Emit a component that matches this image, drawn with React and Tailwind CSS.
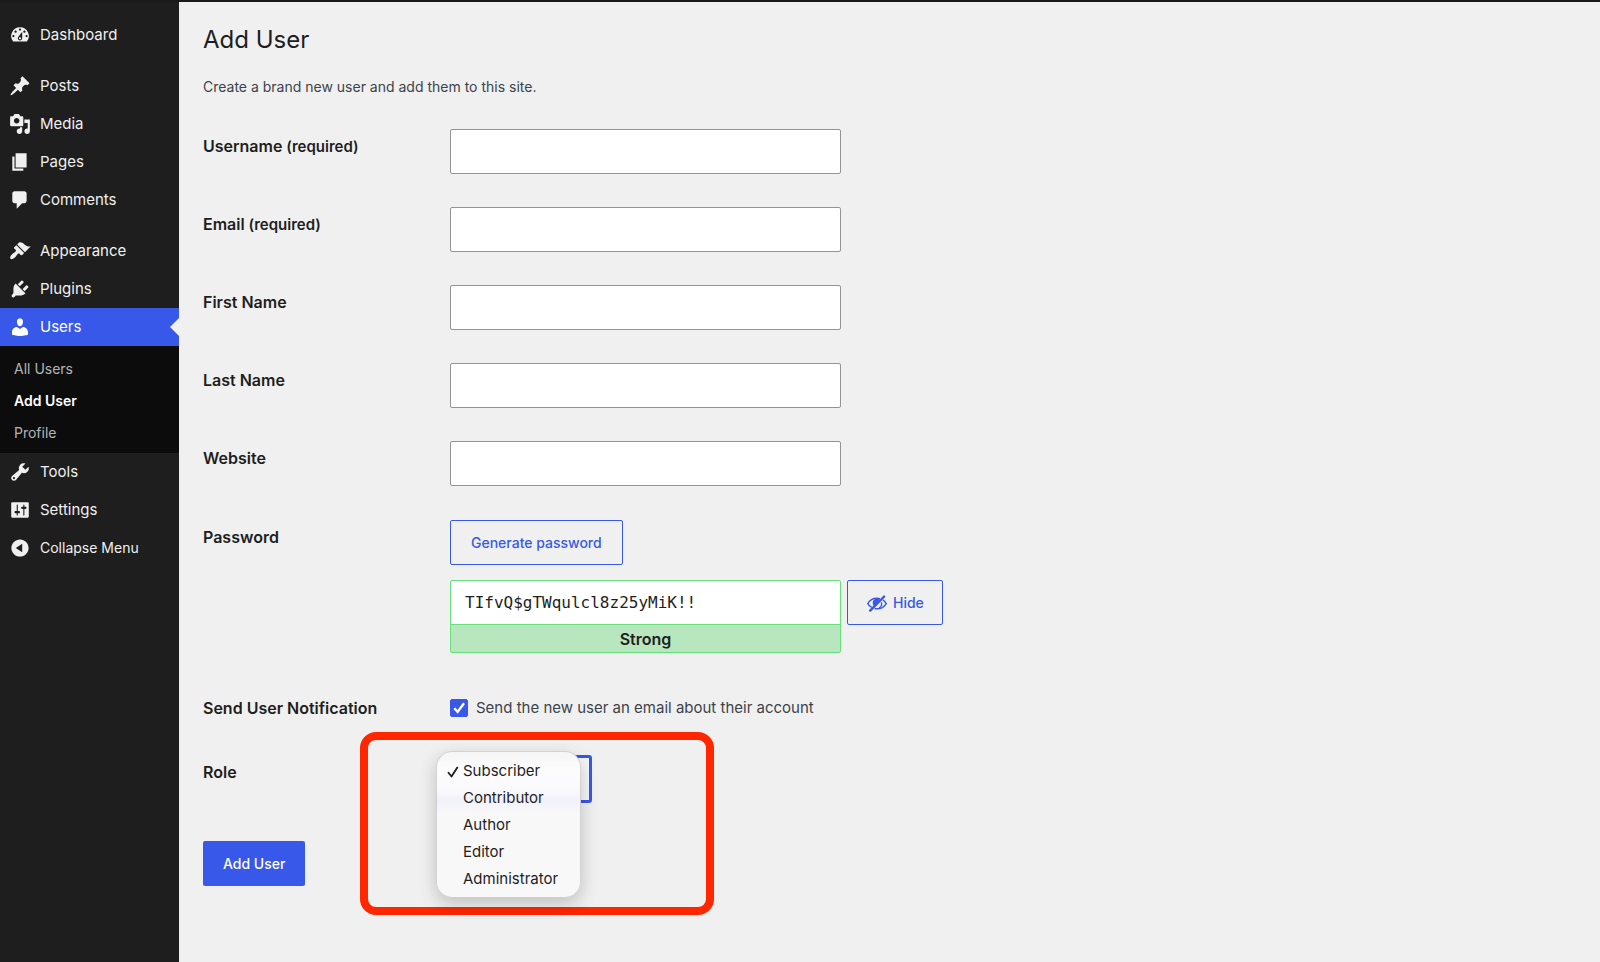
import React, { useState } from "react";
import { clsx } from "clsx";

const ICONS = {
  dashboard:
    "M3.76 16h12.48A7.998 7.998 0 0 0 10 3a7.998 7.998 0 0 0-6.24 13zM10 4c.55 0 1 .45 1 1s-.45 1-1 1s-1-.45-1-1s.45-1 1-1zM6 6c.55 0 1 .45 1 1s-.45 1-1 1s-1-.45-1-1s.45-1 1-1zm8 0c.55 0 1 .45 1 1s-.45 1-1 1s-1-.45-1-1s.45-1 1-1zm-5.37 5.55L12 7v6c0 1.1-.9 2-2 2s-2-.9-2-2c0-.57.24-1.08.63-1.45zM4 10c.55 0 1 .45 1 1s-.45 1-1 1s-1-.45-1-1s.45-1 1-1zm12 0c.55 0 1 .45 1 1s-.45 1-1 1s-1-.45-1-1s.45-1 1-1zm-5 3c0-.55-.45-1-1-1s-1 .45-1 1s.45 1 1 1s1-.45 1-1z",
  posts:
    "M10.44 3.02l1.82-1.82l6.36 6.35l-1.83 1.82c-1.05-.68-2.48-.57-3.41.36l-.75.75c-.92.93-1.04 2.35-.35 3.41l-1.83 1.82l-2.41-2.41l-2.8 2.79c-.42.42-3.38 2.71-3.8 2.29s1.86-3.39 2.28-3.81l2.79-2.79L4.1 9.36l1.83-1.82c1.05.69 2.48.57 3.4-.36l.75-.75c.93-.92 1.05-2.35.36-3.41z",
  media:
    "M13 11V4c0-.55-.45-1-1-1h-1.67L9 1H5L3.67 3H2c-.55 0-1 .45-1 1v7c0 .55.45 1 1 1h10c.55 0 1-.45 1-1zM7 4.5c1.38 0 2.5 1.12 2.5 2.5S8.38 9.5 7 9.5S4.5 8.38 4.5 7S5.62 4.5 7 4.5zM14 6h5v10.5c0 1.38-1.12 2.5-2.5 2.5S14 17.88 14 16.5s1.12-2.5 2.5-2.5c.17 0 .34.02.5.05V9h-3V6zm-4 8.05V13h2v3.5c0 1.38-1.12 2.5-2.5 2.5S7 17.88 7 16.5S8.12 14 9.5 14c.17 0 .34.02.5.05z",
  pages: "M6 15V2h10v13H6zm-1 1h8v2H3V5h2v11z",
  comments:
    "M5 2h9c1.1 0 2 .9 2 2v7c0 1.1-.9 2-2 2h-2l-5 5v-5H5c-1.1 0-2-.9-2-2V4c0-1.1.9-2 2-2z",
  appearance:
    "M14.48 11.06L7.41 3.99l1.5-1.5c.5-.56 2.3-.47 3.51.32c1.21.8 1.43 1.28 2.91 2.1c1.18.64 2.45 1.26 4.45.85zm-.71.71L6.7 4.7L4.93 6.47c-.39.39-.39 1.02 0 1.41l1.06 1.06c.39.39.39 1.03 0 1.42c-.6.6-1.43 1.11-2.21 1.69c-.35.26-.7.53-1.01.84C1.43 14.23.4 16.08 1.4 17.07c.99 1 2.84-.03 4.18-1.36c.31-.31.58-.66.85-1.02c.57-.78 1.08-1.61 1.69-2.21c.39-.39 1.02-.39 1.41 0l1.06 1.06c.39.39 1.02.39 1.41 0z",
  plugins:
    "M13.11 4.36L9.87 7.6L8 5.73l3.24-3.24c.35-.34 1.05-.2 1.56.32c.52.51.66 1.21.31 1.55zm-8 1.77l.91-1.12l9.01 9.01l-1.19.84c-.71.71-2.63 1.16-3.82 1.16H6.14L4.9 17.26c-.59.59-1.54.59-2.12 0a1.49 1.49 0 0 1 0-2.12l1.24-1.24v-3.88c0-1.13.4-3.19 1.09-3.89zm7.26 3.97l3.24-3.24c.34-.35 1.04-.21 1.55.31c.52.51.66 1.21.31 1.55l-3.24 3.25z",
  users:
    "M10 9.25c-2.27 0-2.73-3.44-2.73-3.44C7 4.02 7.82 2 9.97 2c2.16 0 2.98 2.02 2.71 3.81c0 0-.41 3.44-2.68 3.44zm0 2.57L12.72 10c2.39 0 4.52 2.33 4.52 4.53v2.49s-3.65 1.13-7.24 1.13c-3.65 0-7.24-1.13-7.24-1.13v-2.49c0-2.25 1.94-4.48 4.47-4.48z",
  tools:
    "M16.68 9.77a4.543 4.543 0 0 1-4.95.99l-5.41 6.52c-.99.99-2.59.99-3.58 0s-.99-2.59 0-3.57l6.52-5.42c-.68-1.65-.35-3.61.99-4.95c1.28-1.28 3.12-1.62 4.72-1.06l-2.89 2.89l2.82 2.82l2.86-2.87c.53 1.58.18 3.39-1.08 4.65zM3.81 16.21c.4.39 1.04.39 1.43 0c.4-.4.4-1.04 0-1.43c-.39-.4-1.03-.4-1.43 0a1.02 1.02 0 0 0 0 1.43z",
  settings:
    "M18 16V4c0-.55-.45-1-1-1H3c-.55 0-1 .45-1 1v12c0 .55.45 1 1 1h14c.55 0 1-.45 1-1zM8 11h1c.55 0 1 .45 1 1s-.45 1-1 1H8v1.5c0 .28-.22.5-.5.5s-.5-.22-.5-.5V13H6c-.55 0-1-.45-1-1s.45-1 1-1h1V5.5c0-.28.22-.5.5-.5s.5.22.5.5V11zm5-2h-1c-.55 0-1-.45-1-1s.45-1 1-1h1V5.5c0-.28.22-.5.5-.5s.5.22.5.5V7h1c.55 0 1 .45 1 1s-.45 1-1 1h-1v5.5c0 .28-.22.5-.5.5s-.5-.22-.5-.5V9z",
  collapse:
    "M10 2.16c4.33 0 7.84 3.51 7.84 7.84s-3.51 7.84-7.84 7.84S2.16 14.33 2.16 10S5.71 2.16 10 2.16zm2 11.72V6.12L6.18 9.97z",
};

const menuGroups = [
  [{ label: "Dashboard", icon: "dashboard" }],
  [
    { label: "Posts", icon: "posts" },
    { label: "Media", icon: "media" },
    { label: "Pages", icon: "pages" },
    { label: "Comments", icon: "comments" },
  ],
  [
    { label: "Appearance", icon: "appearance" },
    { label: "Plugins", icon: "plugins" },
    {
      label: "Users",
      icon: "users",
      current: true,
      children: ["All Users", "Add User", "Profile"],
    },
    { label: "Tools", icon: "tools" },
    { label: "Settings", icon: "settings" },
  ],
];

const textFields = [
  { id: "username", label: "Username", required: true },
  { id: "email", label: "Email", required: true },
  { id: "first-name", label: "First Name" },
  { id: "last-name", label: "Last Name" },
  { id: "website", label: "Website" },
];

const roles = ["Subscriber", "Contributor", "Author", "Editor", "Administrator"];

const Icon = ({ name, className }) => (
  <svg viewBox="0 0 20 20" fill="currentColor" fillRule="evenodd" aria-hidden="true" className={className}>
    <path d={ICONS[name]} />
  </svg>
);

const HiddenIcon = () => (
  <svg viewBox="0 0 20 20" fill="none" stroke="currentColor" aria-hidden="true" className="size-[22px]">
    <path strokeWidth="1.3" d="M12.6 6.1C11.8 5.9 10.9 5.7 10 5.7 6.5 5.7 3.3 7.5 1.6 10.500c.9 1.5 2.1 2.7 3.6 3.5M15.3 7.2c1.2.8 2.3 1.9 3.1 3.3-1.8 3-5 4.8-8.4 4.8-.8 0-1.500-.1-2.2-.3" />
    <path fill="currentColor" stroke="none" d="M7.2 6.8C5.800 8.500 5.700 11 7 12.800L12.900 6.600C11 5.900 8.800 5.900 7.200 6.800z" />
    <path strokeWidth="1.2" d="M14 9.300c.6 2-.3 4.200-2.200 5.300" />
    <path strokeWidth="2.2" strokeLinecap="round" d="M16.5 4.1L3.8 16.9" />
  </svg>
);

const Sidebar = () => (
  <aside className="w-[179px] shrink-0 bg-[#1e1e1e] text-[#f0f0f0]">
    <nav className="flex flex-col gap-[13px] pt-3.5" aria-label="Main menu">
      {menuGroups.map((group) => (
        <ul key={group[0].label}>
          {group.map((item) => (
            <li key={item.label}>
              <a
                href="#"
                className={clsx(
                  "relative flex h-[38px] items-center gap-[9px] pl-[9px] text-[15px]",
                  item.current && "bg-[#3858e9] text-white"
                )}
              >
                <Icon name={item.icon} className="size-[22px]" />
                {item.label}
                {item.current && (
                  <span className="absolute right-0 top-1/2 -translate-y-1/2 border-y-[9px] border-r-[9px] border-y-transparent border-r-[#f0f0f0]" />
                )}
              </a>
              {item.children && (
                <ul className="bg-[#0c0c0c] pb-1 pt-[7px]">
                  {item.children.map((child) => (
                    <li key={child}>
                      <a
                        href="#"
                        className={clsx(
                          "flex h-8 items-center pl-3.5 text-sm",
                          child === "Add User" ? "font-semibold text-white" : "text-[#b4b4b4]"
                        )}
                      >
                        {child}
                      </a>
                    </li>
                  ))}
                </ul>
              )}
            </li>
          ))}
        </ul>
      ))}
    </nav>
    <button type="button" className="flex h-[38px] w-full items-center gap-[9px] pl-[9px] text-sm">
      <Icon name="collapse" className="size-[22px]" />
      Collapse Menu
    </button>
  </aside>
);

const Row = ({ label, htmlFor, required, className, children }) => (
  <div className={clsx("grid grid-cols-[247px_1fr] items-start", className)}>
    <label htmlFor={htmlFor} className="pt-[5px] text-base font-semibold text-[#1e1e1e]">
      {label}
      {required && <span className="text-[15px]"> (required)</span>}
    </label>
    <div>{children}</div>
  </div>
);

const RolePicker = ({ role, onChange }) => (
  <div className="relative w-fit">
    <select
      id="role"
      value={role}
      onChange={(e) => onChange(e.target.value)}
      className="block h-12 w-[142px] appearance-none rounded-[3px] border-[3px] border-[#3858e9] bg-[#f6f6f6] pl-3 text-[15px]"
    >
      {roles.map((r) => (
        <option key={r}>{r}</option>
      ))}
    </select>

    {/* Highlight frame */}
    <div className="pointer-events-none absolute -left-[90px] -top-[23px] h-[183px] w-[354px] rounded-2xl border-8 border-[#ff2600]" />

    {/* Open menu */}
    <ul
      role="listbox"
      aria-label="Role"
      className="absolute -left-3.5 -top-1 w-[145px] rounded-2xl border border-black/15 bg-[linear-gradient(#f5f5f6,#fcfcfd_12%,#fafafd_26%,#f1f1fb_33%,#f8f8f9_42%)] px-2.5 pt-1.5 pb-1 shadow-[0_6px_18px_rgba(0,0,0,0.2)]"
    >
      {roles.map((r) => (
        <li
          key={r}
          role="option"
          aria-selected={r === role}
          onClick={() => onChange(r)}
          className="flex h-[27px] items-center gap-1 text-[15px] text-[#1e1e1e]"
        >
          <svg viewBox="0 0 12 12" className="size-3 shrink-0" fill="none" stroke="currentColor" strokeWidth="1.8" strokeLinecap="round" strokeLinejoin="round">
            {r === role && <path d="M1.5 6.8L4.5 10.5L10.3 1.6" />}
          </svg>
          {r}
        </li>
      ))}
    </ul>
  </div>
);

const App = () => {
  const [password, setPassword] = useState("TIfvQ$gTWqulcl8z25yMiK!!");
  const [notify, setNotify] = useState(true);
  const [role, setRole] = useState("Subscriber");

  return (
    <div className="flex min-h-screen border-t-2 border-[#1a1a1a] bg-[#f0f0f0] font-['Inter',sans-serif] text-[#3c434a]">
      <Sidebar />
      <main className="flex-1 px-6 pt-5">
        <h1 className="text-2xl leading-9 text-[#1e1e1e]">Add User</h1>
        <p className="mt-[18px] text-sm leading-[22px]">Create a brand new user and add them to this site.</p>

        <form className="mt-[31px]" onSubmit={(e) => e.preventDefault()}>
          <div className="space-y-[33px]">
            {textFields.map((field) => (
              <Row key={field.id} label={field.label} htmlFor={field.id} required={field.required}>
                <input
                  id={field.id}
                  type="text"
                  className="block h-[45px] w-[391px] rounded-xs border border-[#949494] bg-white px-3.5 text-base"
                />
              </Row>
            ))}
          </div>

          <Row label="Password" htmlFor="password" className="mt-[34px]">
            <button type="button" className="block h-[45px] rounded-xs border border-[#3858e9] px-5 text-sm font-medium text-[#3858e9]">
              Generate password
            </button>
            <div className="mt-[15px] flex items-start gap-1.5">
              <div className="w-[391px]">
                <input
                  id="password"
                  type="text"
                  value={password}
                  onChange={(e) => setPassword(e.target.value)}
                  className="block h-[45px] w-full rounded-t-xs border border-[#68de7c] bg-white px-3.5 font-['DejaVu_Sans_Mono',monospace] text-base text-[#1e1e1e]"
                />
                <div className="-mt-px h-[29px] rounded-b-xs border border-[#68de7c] bg-[#b8e6bf] text-center text-base leading-7 font-semibold text-[#1e1e1e]">
                  Strong
                </div>
              </div>
              <button type="button" className="flex h-[45px] items-center gap-[5px] rounded-xs border border-[#3858e9] px-[18px] text-sm font-medium text-[#3858e9]">
                <HiddenIcon />
                Hide
              </button>
            </div>
          </Row>

          <Row label="Send User Notification" htmlFor="notify" className="mt-[38px]">
            <label className="flex items-center gap-2 pt-[5px] text-[15px] leading-6">
              <span className="relative size-[18px]">
                <input
                  id="notify"
                  type="checkbox"
                  checked={notify}
                  onChange={(e) => setNotify(e.target.checked)}
                  className="block size-[18px] appearance-none rounded-xs border border-[#949494] bg-white checked:border-[#3858e9] checked:bg-[#3858e9]"
                />
                {notify && (
                  <svg viewBox="0 0 18 18" className="pointer-events-none absolute inset-0" fill="none" stroke="#fff" strokeWidth="2.4">
                    <path d="M4.3 9.3L7.6 12.9L14 4.3" />
                  </svg>
                )}
              </span>
              Send the new user an email about their account
            </label>
          </Row>

          <Row label="Role" htmlFor="role" className="mt-[35px]">
            <RolePicker role={role} onChange={setRole} />
          </Row>

          <button type="submit" className="mt-[38px] h-[45px] rounded-xs bg-[#3858e9] px-5 text-sm font-medium text-white">
            Add User
          </button>
        </form>
      </main>
    </div>
  );
};

export default App;
